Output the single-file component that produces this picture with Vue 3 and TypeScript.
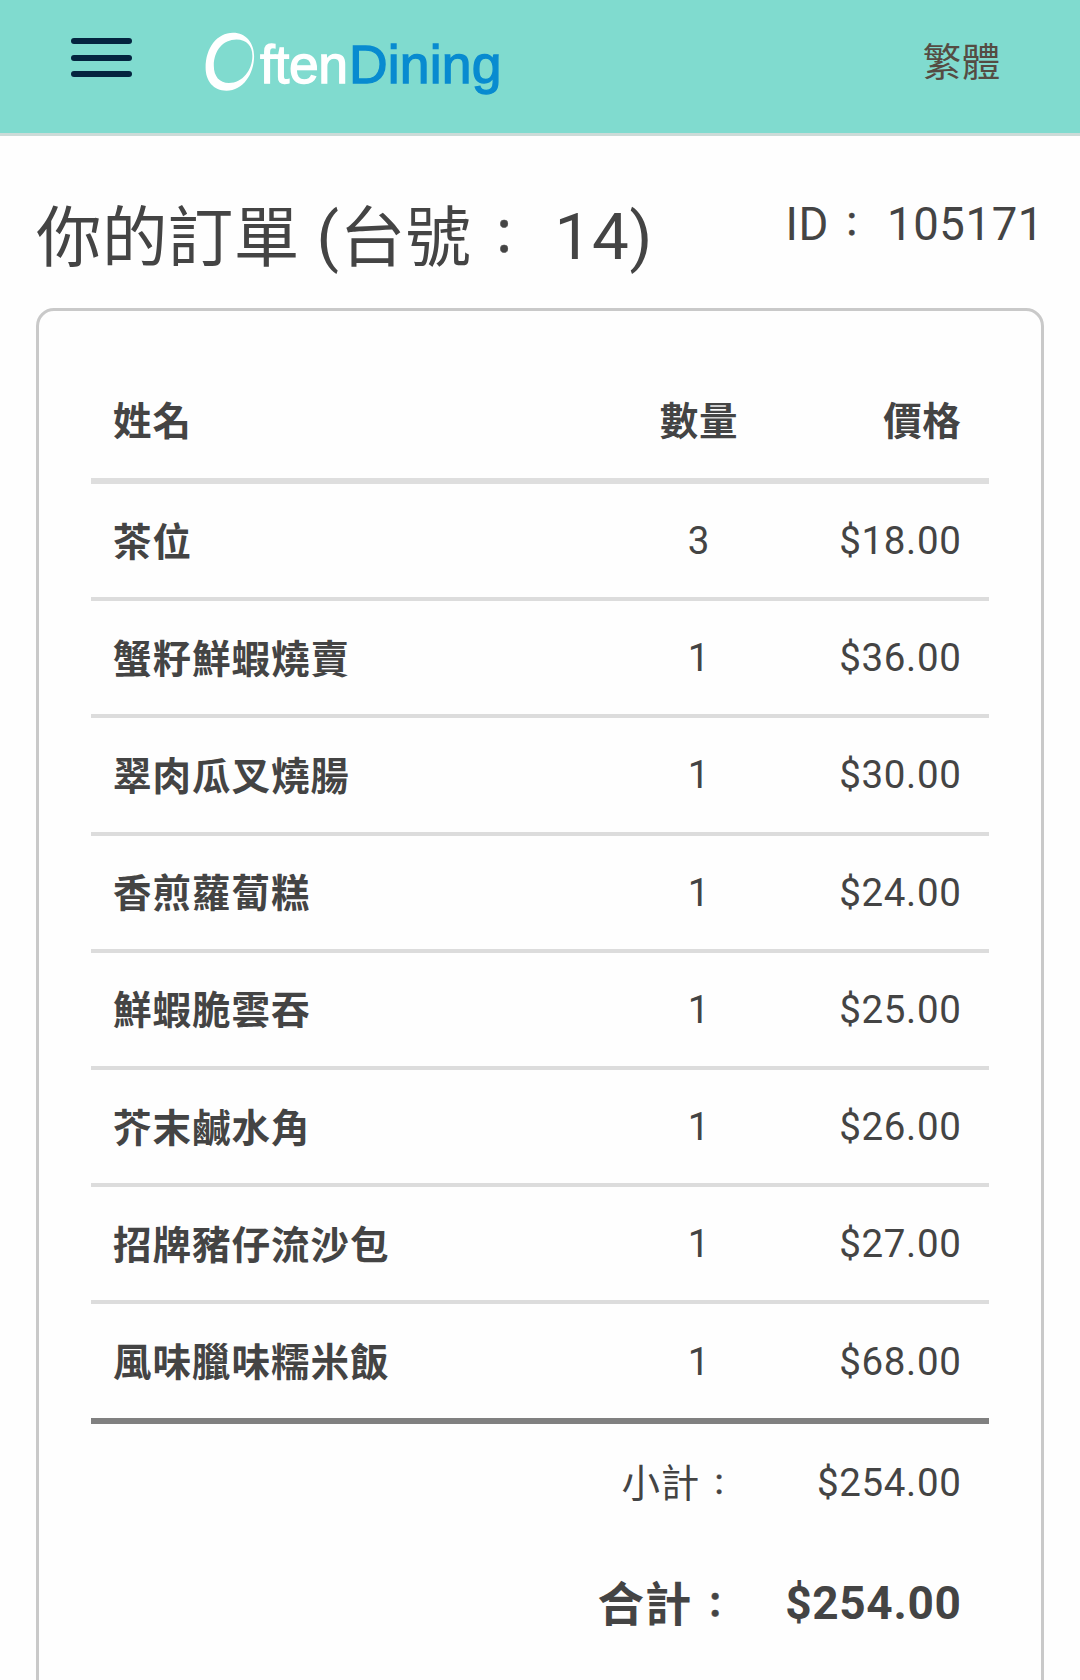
<script setup lang="ts">
interface OrderItem {
  name: string
  qty: number
  price: number
}

const tableNo = 14
const orderId = '105171'
const items: OrderItem[] = [
  { name: '茶位', qty: 3, price: 18 },
  { name: '蟹籽鮮蝦燒賣', qty: 1, price: 36 },
  { name: '翠肉瓜叉燒腸', qty: 1, price: 30 },
  { name: '香煎蘿蔔糕', qty: 1, price: 24 },
  { name: '鮮蝦脆雲吞', qty: 1, price: 25 },
  { name: '芥末鹹水角', qty: 1, price: 26 },
  { name: '招牌豬仔流沙包', qty: 1, price: 27 },
  { name: '風味臘味糯米飯', qty: 1, price: 68 },
]
const total = 254
const money = (n: number): string => `$${n.toFixed(2)}`
</script>

<template>
  <div class="page" lang="zh-Hant">
    <header class="topbar">
      <div class="menu"><span></span><span></span><span></span></div>
      <svg class="logo" width="310" height="80" viewBox="0 0 310 80">
        <path
          fill="#fff"
          fill-rule="evenodd"
          d="M28 .7C41 .7 49.100 11 49.100 24C49.100 42 38 58.700 21.500 58.700C8.500 58.700 .6 49 .6 35.500C.6 16 12 .7 28 .7ZM31.500 7.600C18 7.600 8.800 19 8.800 33.500C8.800 44.500 14.500 51 24 51C37.500 51 47.400 38 47.400 24C47.400 14 41.500 7.600 31.500 7.600Z"
        />
        <text x="55" y="51" class="word often" textLength="88">ften</text>
        <text x="144" y="51" class="word dining" textLength="152.500">Dining</text>
      </svg>
      <div class="lang">繁體</div>
    </header>

    <div class="heading">
      <h1><span class="cjk">你的訂單</span> (<span class="cjk">台號</span><span class="colon">：</span> {{ tableNo }})</h1>
      <div class="order-id">ID<span class="colon">：</span> {{ orderId }}</div>
    </div>

    <section class="card">
      <div class="row head">
        <span class="name">姓名</span>
        <span class="qty">數量</span>
        <span class="price">價格</span>
      </div>
      <div v-for="item in items" :key="item.name" class="row item">
        <span class="name">{{ item.name }}</span>
        <span class="qty">{{ item.qty }}</span>
        <span class="price">{{ money(item.price) }}</span>
      </div>
      <div class="sum sub">
        <span class="label">小計<span class="colon">：</span></span>
        <span class="amount">{{ money(total) }}</span>
      </div>
      <div class="sum grand">
        <span class="label">合計<span class="colon">：</span></span>
        <span class="amount">{{ money(total) }}</span>
      </div>
    </section>
  </div>
</template>

<style>
body {
  margin: 0;
  background: #fefefe;
}
</style>

<style scoped>
.page {
  box-sizing: border-box;
  width: 1080px;
  height: 1680px;
  overflow: hidden;
  display: flex;
  flex-direction: column;
  background: #fefefe;
  color: #444;
  font-family: Roboto, 'Noto Sans CJK TC', sans-serif;
  font-size: 38.5px;
  letter-spacing: 0.65px;
  white-space: nowrap;
}
.topbar {
  box-sizing: border-box;
  flex: none;
  height: 136px;
  border-bottom: 3px solid #ccdbd8;
  background: #80dbcf;
  display: flex;
  align-items: flex-start;
  padding: 0 79px 0 71px;
}
.menu {
  display: flex;
  flex-direction: column;
  gap: 10.500px;
  margin-top: 38px;
  width: 61px;
}
.menu span {
  height: 6px;
  border-radius: 3px;
  background: #04243f;
}
.logo {
  margin: 32px 0 0 73px;
}
.word {
  font-family: 'Liberation Sans', Arial, sans-serif;
  font-size: 53.5px;
  letter-spacing: 0;
  stroke-width: 1.300px;
}
.often {
  fill: #fff;
  stroke: #fff;
}
.dining {
  fill: #088bd0;
  stroke: #088bd0;
}
.lang {
  margin: 35px 0 0 auto;
  line-height: 56px;
  color: #554c43;
}
.heading {
  flex: none;
  display: flex;
  justify-content: space-between;
  height: 172px;
  padding: 0 36px 0 36px;
}
h1 {
  margin: 53px 0 0;
  font-size: 65.5px;
  line-height: 96px;
  font-weight: 400;
  letter-spacing: 0.7px;
}
.cjk {
  line-height: 0;
  vertical-align: -2px;
  letter-spacing: 0.4px;
}
/* compact colon kept in a full-width cell */
.colon {
  font-size: 0.76em;
  line-height: 0;
  margin: 0 0.157em;
  vertical-align: 0.08em;
  -webkit-text-stroke: 0.4px currentColor;
}
.order-id {
  margin-top: 56px;
  font-size: 45.5px;
  line-height: 66px;
  letter-spacing: 0.6px;
}
.card {
  box-sizing: border-box;
  flex: none;
  margin: 0 36px;
  height: 1460px;
  border: 3px solid #c9c9c9;
  border-radius: 18px;
  padding: 49px 52px 0;
}
.row {
  box-sizing: border-box;
  display: grid;
  grid-template-columns: 1fr 176px 174.5px;
  align-items: center;
  padding: 0 27.5px 0 22px;
}
.head {
  height: 124px;
  border-bottom: 6px solid #dedede;
  font-weight: 700;
}
.head > span {
  padding-bottom: 2px;
}
.item {
  height: 117.2px;
  border-bottom: 4px solid #dcdcdc;
}
.item:nth-child(9) {
  height: 119.600px;
  border-bottom: 6px solid #808080;
}
.name {
  font-weight: 700;
  letter-spacing: 1px;
}
.item .name {
  padding-bottom: 4px;
}
.qty {
  text-align: center;
}
.price {
  text-align: right;
}
.sum {
  display: grid;
  grid-template-columns: 648px 1fr;
  align-items: center;
  padding-right: 27.5px;
  text-align: right;
}
.label {
  padding-bottom: 6px;
}
.sub {
  height: 118px;
}
.grand {
  height: 122px;
  font-size: 46px;
  font-weight: 700;
}
.grand .label {
  font-size: 46.5px;
  padding-bottom: 5px;
}
</style>
